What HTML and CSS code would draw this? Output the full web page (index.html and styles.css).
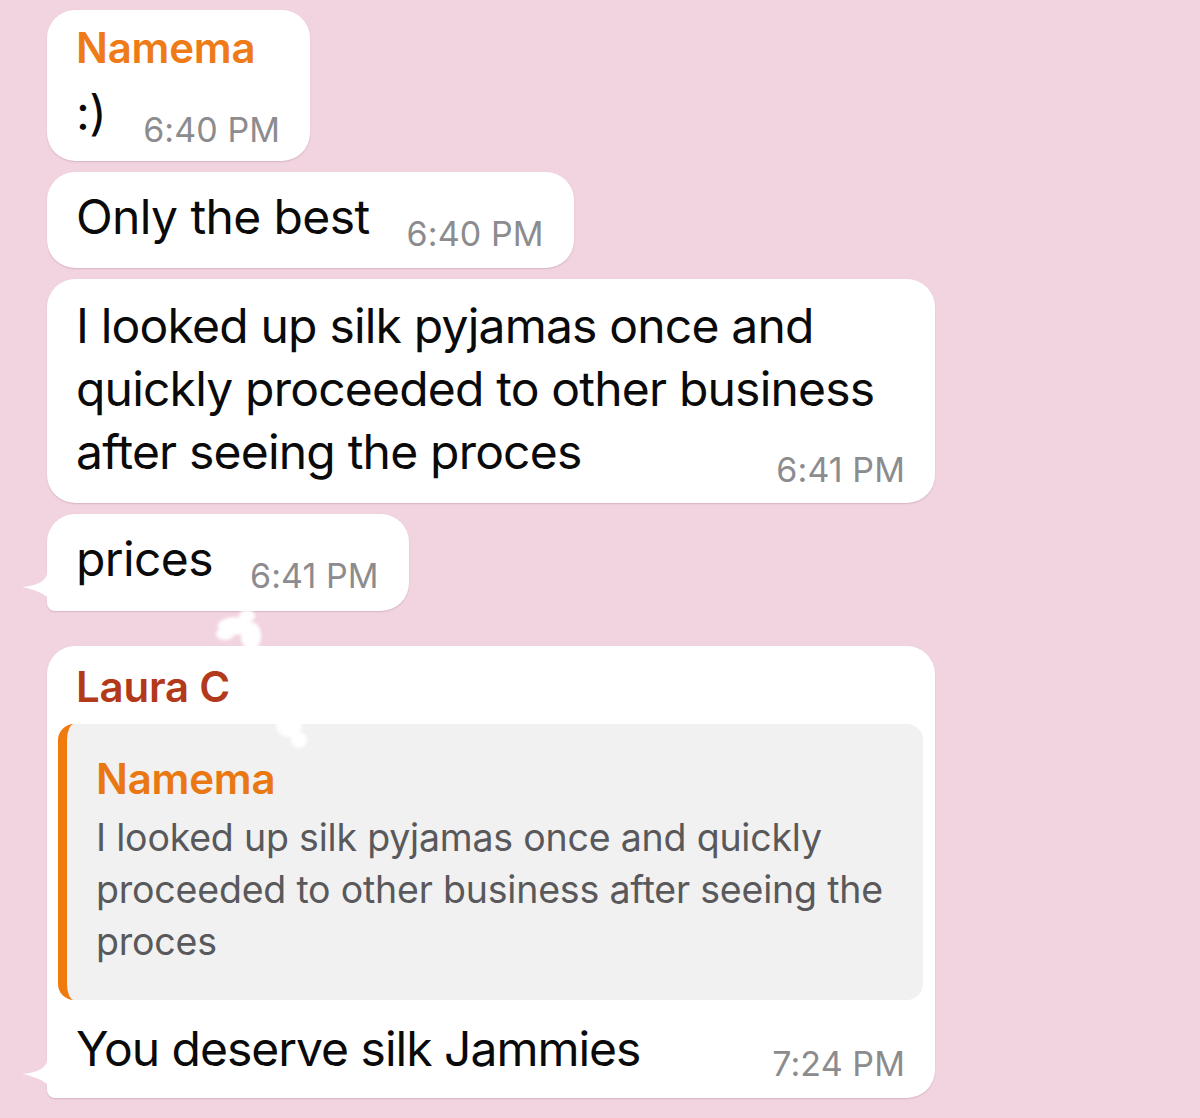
FILE: index.html
```html
<!DOCTYPE html>
<html lang="en">
<head>
<meta charset="utf-8">
<title>Chat</title>
<link rel="stylesheet" href="styles.css">
</head>
<body>
<div class="chat">
  <div class="bubble b1">
    <div class="name">Namema</div>
    <div class="line"><span class="txt">:)</span><span class="time">6:40 PM</span></div>
  </div>
  <div class="bubble b2">
    <div class="line"><span class="txt">Only the best</span><span class="time">6:40 PM</span></div>
  </div>
  <div class="bubble wide b3">
    <p class="para">I looked up silk pyjamas once and quickly proceeded to other business after seeing the proces<span class="time fl">6:41 PM</span></p>
  </div>
  <div class="bubble tailed b4">
    <div class="line"><span class="txt">prices</span><span class="time">6:41 PM</span></div>
    <svg class="tail" width="40" height="46" viewBox="0 0 40 46"><path d="M26 0 L26 8 C26 16 15 21 1 22 C12 24 23 28 31 36 C37 42 46 46 40 46 L40 0 Z" fill="#fff"/></svg>
  </div>
  <div class="bubble wide tailed b5">
    <div class="name sender">Laura C</div>
    <div class="reply">
      <div class="name rname">Namema</div>
      <p class="rtext">I looked up silk pyjamas once and quickly proceeded to other business after seeing the proces</p>
    </div>
    <p class="para last">You deserve silk Jammies<span class="time fl">7:24 PM</span></p>
    <svg class="tail" width="40" height="46" viewBox="0 0 40 46"><path d="M26 0 L26 8 C26 16 15 21 1 22 C12 24 23 28 31 36 C37 42 46 46 40 46 L40 0 Z" fill="#fff"/></svg>
    <svg class="smudge" width="200" height="150" viewBox="0 0 200 150">
      <defs><filter id="bl" x="-20%" y="-20%" width="140%" height="140%"><feGaussianBlur stdDeviation="1.6"/></filter></defs>
      <g fill="#fff" filter="url(#bl)">
        <ellipse cx="22" cy="16" rx="17" ry="9"/>
        <ellipse cx="38" cy="26" rx="10" ry="14"/>
        <ellipse cx="12" cy="24" rx="9" ry="6"/>
        <ellipse cx="34" cy="6" rx="8" ry="6"/>
        <path d="M16 58 C16 50 22 46 28 47 L190 46 L190 90 L22 90 Z"/>
        <ellipse cx="58" cy="100" rx="18" ry="9"/>
        <ellipse cx="76" cy="114" rx="13" ry="13"/>
        <ellipse cx="86" cy="130" rx="8" ry="8"/>
      </g>
    </svg>
  </div>
</div>
</body>
</html>
```

FILE: styles.css
```css
html, body {
  margin: 0;
  padding: 0;
}
body {
  background: #f2d4e0;
  font-family: Inter, "Noto Sans", sans-serif;
  color: #0a0a0a;
  width: 1200px;
  height: 1118px;
  overflow: hidden;
}
.chat {
  display: flex;
  flex-direction: column;
  align-items: flex-start;
  gap: 11px;
  padding: 10px 0 0 47px;
}
.bubble {
  position: relative;
  background: #fff;
  border-radius: 28px;
  box-shadow: 0 1px 1.5px rgba(140, 80, 110, 0.25);
  padding: 16px 30px 22px 29px;
  box-sizing: border-box;
}
.bubble.tailed {
  border-bottom-left-radius: 8px;
}
.name {
  font-size: 42px;
  line-height: 44px;
  font-weight: 600;
  color: #ee7a18;
  letter-spacing: -0.2px;
}
.b1 {
  padding-top: 16px;
  padding-bottom: 19px;
}
.b1 .name {
  margin-bottom: 14px;
}
.line {
  font-size: 48px;
  line-height: 58px;
  white-space: nowrap;
  letter-spacing: -0.6px;
}
.time {
  font-size: 34px;
  line-height: 0;
  color: #8c8c8f;
  margin-left: 37px;
  vertical-align: -12px;
  letter-spacing: 0.1px;
}
.time.fl {
  float: right;
  line-height: 32px;
  margin: 34px 0 0 30px;
  vertical-align: baseline;
}
.wide {
  width: 888px;
}
.b3 {
  padding: 15px 30px 17px 29px;
}
.para {
  margin: 0;
  font-size: 48px;
  line-height: 63px;
  letter-spacing: -0.8px;
}
.b4 {
  padding-bottom: 23px;
  margin-bottom: 24px;
}
.tail {
  position: absolute;
  left: -26px;
  bottom: 0;
}
.b5 {
  padding: 19px 12px 18px 11px;
}
.sender {
  color: #b2391a;
  padding-left: 18px;
}
.reply {
  margin-top: 15px;
  background: #f1f1f2;
  border-left: 9px solid #f07a0c;
  border-radius: 16px;
  padding: 33px 20px 32px 29px;
}
.rname {
  color: #e97812;
}
.rtext {
  margin: 11px 0 0 0;
  font-size: 37.5px;
  line-height: 52px;
  color: #59595b;
  letter-spacing: -0.2px;
}
.para.last {
  margin-top: 20px;
  padding: 0 18px;
  line-height: 58px;
  letter-spacing: -1px;
}
.para.last .time.fl {
  margin-top: 28px;
}
.smudge {
  position: absolute;
  left: 166px;
  top: -36px;
}
```
